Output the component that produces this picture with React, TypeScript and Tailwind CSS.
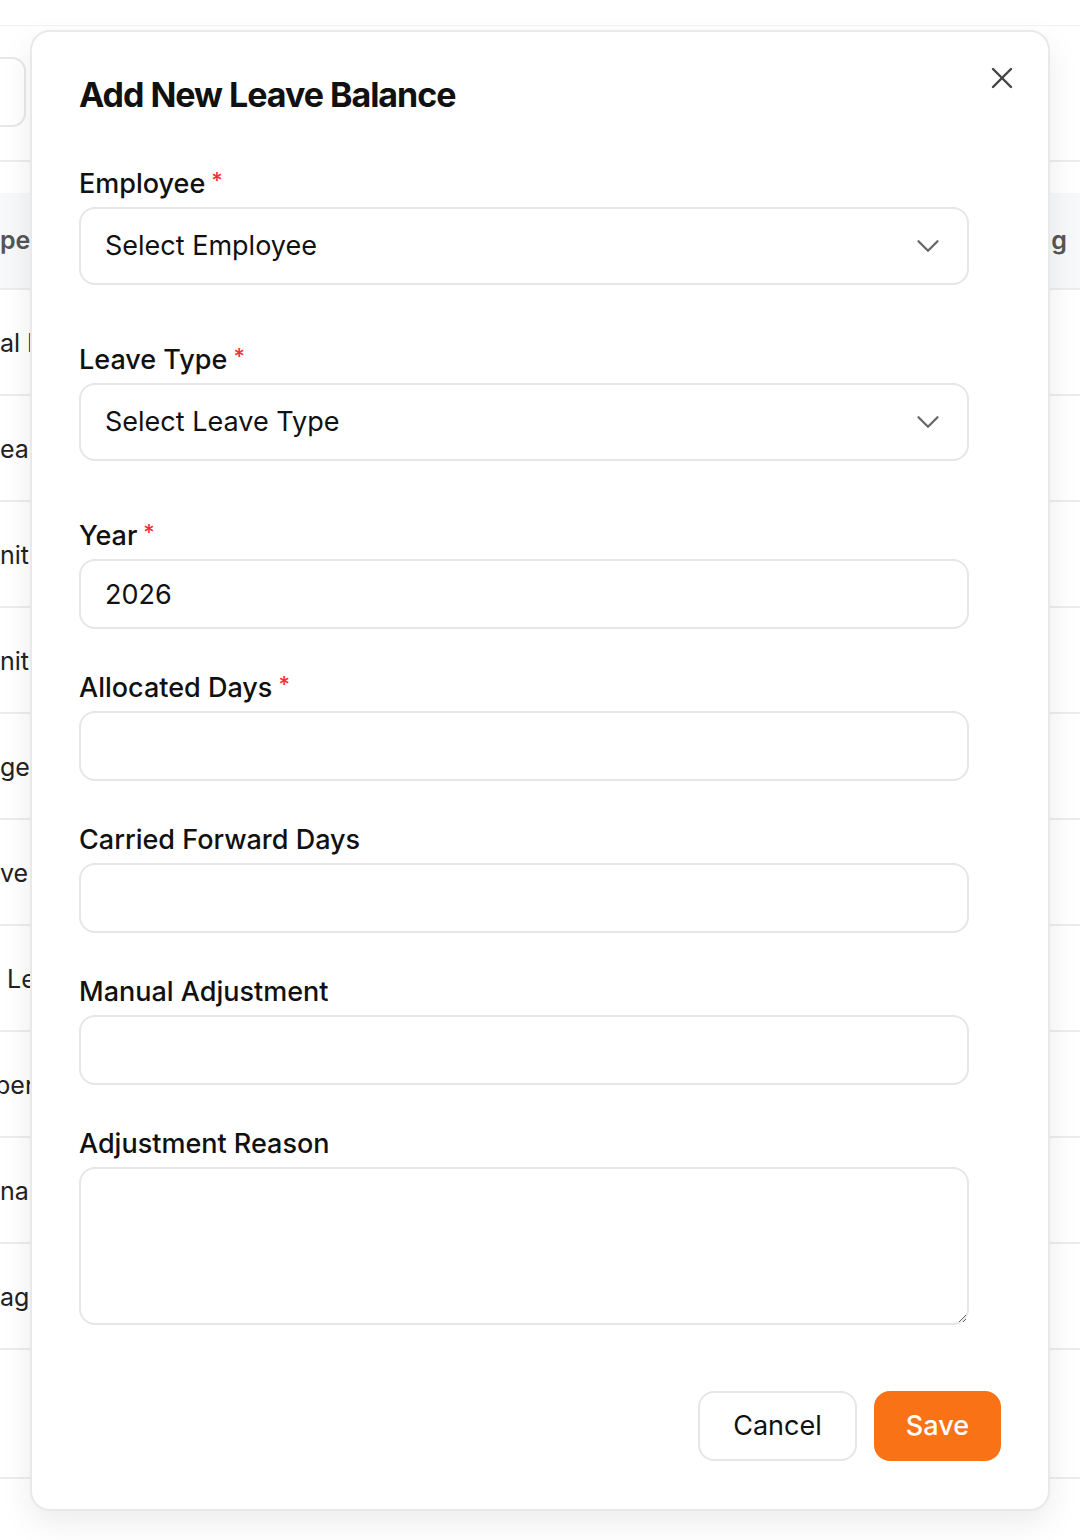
import React from 'react';
import { X, ChevronDown } from 'lucide-react';

const leaveRows = ['al Leave', 'ea', 'nity', 'nity', 'ge', 've', 'Le', 'per', 'na', 'age'];

const Asterisk: React.FC = () => (
  <span className="ml-[6px] align-[5px] text-[22px] leading-none text-red-500">*</span>
);

type FieldProps = {
  label: string;
  required?: boolean;
  className?: string;
  children: React.ReactNode;
};

const Field: React.FC<FieldProps> = ({ label, required, className = '', children }) => (
  <div className={className}>
    <label className="mb-[5px] block text-[27px] font-medium leading-[36px] text-[#111]">
      {label}
      {required && <Asterisk />}
    </label>
    {children}
  </div>
);

const SelectBox: React.FC<{ placeholder: string }> = ({ placeholder }) => (
  <button
    type="button"
    className="flex h-[78px] w-full items-center justify-between rounded-[16px] border-2 border-[#e6e6e6] bg-white pl-[24px] pr-[20px] text-left text-[27px] text-[#111]"
  >
    <span>{placeholder}</span>
    <ChevronDown size={38} strokeWidth={1.4} className="text-[#666]" />
  </button>
);

const inputCls =
  'block h-[70px] w-full rounded-[16px] border-2 border-[#e6e6e6] bg-white px-[24px] text-[27px] text-[#111] outline-none';

const App: React.FC = () => {
  return (
    <div className="relative h-[1540px] w-full overflow-hidden bg-white font-['Inter',sans-serif]">
      {/* page behind the dialog */}
      <div className="h-[26px] border-b border-[#f2f2f2]" />
      <div className="h-[136px] border-b-2 border-[#ededed] pt-[31px]">
        <div className="-ml-[174px] h-[70px] w-[200px] rounded-[14px] border-2 border-[#e8e8e8]" />
      </div>

      <div className="mt-[31px] border-b-2 border-[#ededed]">
        <div className="flex h-[97px] items-center border-b-2 border-[#ededed] bg-[#f7f8fa] text-[25px] font-semibold text-[#555]">
          <div className="w-[60px] shrink-0 overflow-hidden whitespace-nowrap">pe</div>
          <div className="flex-1" />
          <div className="w-[44px] shrink-0 overflow-hidden whitespace-nowrap">ng</div>
        </div>
        {leaveRows.map((r, i) => (
          <div
            key={i}
            className="flex h-[106px] items-center border-b-2 border-[#ededed] pt-[4px] text-[25px] text-[#222]"
          >
            <div className="w-[60px] shrink-0 overflow-hidden whitespace-nowrap">
              <span className={r === 'Le' ? 'ml-[7px]' : r === 'per' ? '-ml-[5px]' : ''}>{r}</span>
            </div>
            <div className="flex-1" />
            <div className="w-[44px] shrink-0" />
          </div>
        ))}
        <div className="h-[127px]" />
      </div>

      {/* dialog */}
      <div className="absolute left-[30px] top-[30px] w-[1020px] rounded-[20px] border-2 border-[#e9e9e9] bg-white px-[47px] pb-[48px] pt-[43px] shadow-[0_12px_32px_rgba(0,0,0,0.08)]">
        <button
          type="button"
          className="absolute right-[28px] top-[28px] flex h-[36px] w-[36px] items-center justify-center text-[#444]"
        >
          <X size={36} strokeWidth={1.6} />
        </button>

        <h2 className="text-[34px] font-bold leading-[40px] tracking-[-0.03em] text-[#111]">
          Add New Leave Balance
        </h2>

        <div className="mt-[51px] pr-[32px]">
          <Field label="Employee" required className="mb-[57px]">
            <SelectBox placeholder="Select Employee" />
          </Field>
          <Field label="Leave Type" required className="mb-[57px]">
            <SelectBox placeholder="Select Leave Type" />
          </Field>
          <Field label="Year" required className="mb-[41px]">
            <input className={inputCls} defaultValue="2026" />
          </Field>
          <Field label="Allocated Days" required className="mb-[41px]">
            <input className={inputCls} />
          </Field>
          <Field label="Carried Forward Days" className="mb-[41px]">
            <input className={inputCls} />
          </Field>
          <Field label="Manual Adjustment" className="mb-[41px]">
            <input className={inputCls} />
          </Field>
          <Field label="Adjustment Reason">
            <textarea className="block h-[158px] w-full resize-y rounded-[16px] border-2 border-[#e6e6e6] bg-white px-[24px] py-[16px] text-[27px] text-[#111] outline-none" />
          </Field>
        </div>

        <div className="mt-[66px] flex justify-end gap-[17px]">
          <button
            type="button"
            className="h-[70px] rounded-[16px] border-2 border-[#e6e6e6] bg-white px-[33px] text-[27px] text-[#111]"
          >
            Cancel
          </button>
          <button
            type="button"
            className="h-[70px] rounded-[16px] bg-[#f97316] px-[32px] text-[27px] font-medium text-white"
          >
            Save
          </button>
        </div>
      </div>
    </div>
  );
};

export default App;
